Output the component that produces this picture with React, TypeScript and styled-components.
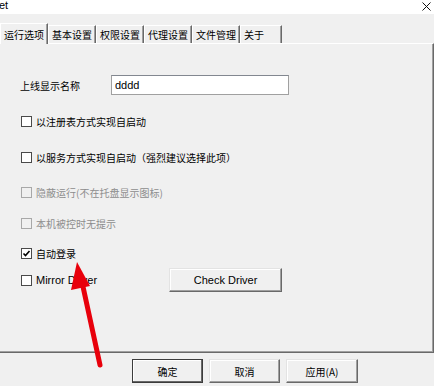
import React, { useState } from "react";
import styled, { createGlobalStyle } from "styled-components";

const cjk = `"Noto Sans CJK SC", "Liberation Sans", sans-serif`;
const latin = `"Liberation Sans", "Noto Sans CJK SC", sans-serif`;

const GlobalStyle = createGlobalStyle`
  html, body {
    margin: 0;
    padding: 0;
    background: #f0f0f0;
  }
  * {
    box-sizing: border-box;
  }
`;

const Window = styled.div`
  position: relative;
  width: 434px;
  height: 386px;
  overflow: hidden;
  background: #f0f0f0;
  font-family: ${latin};
  color: #000;
  display: flex;
  flex-direction: column;
`;

const TitleBar = styled.div`
  height: 14px;
  background: #fff;
  display: flex;
  justify-content: space-between;
  align-items: flex-start;
`;

const Title = styled.span`
  font-size: 11px;
  line-height: 11px;
  margin-left: -1px;
`;

const CloseIcon = styled.svg`
  margin: 2px 3px 0 0;
`;

const TabStrip = styled.div`
  display: flex;
  align-items: flex-end;
  height: 21px;
  margin-top: 8px;
`;

const Tab = styled.div<{ $active?: boolean; $extra?: number }>`
  height: ${(p) => (p.$active ? 21 : 18)}px;
  padding: 0 ${(p) => 3 + (p.$extra || 0)}px 0 3px;
  display: flex;
  align-items: center;
  font-family: ${cjk};
  font-size: 10px;
  white-space: nowrap;
  border-top: 1px solid #fff;
  border-left: 1px solid #fff;
  border-right: 1px solid #696969;
  box-shadow: inset -1px 0 #a0a0a0;
  position: relative;
  z-index: ${(p) => (p.$active ? 2 : 1)};
  margin-bottom: ${(p) => (p.$active ? -1 : 0)}px;
  background: #f0f0f0;
`;

const Panel = styled.div`
  width: 434px;
  height: 310px;
  border-top: 1px solid #fff;
  border-right: 1px solid #696969;
  border-bottom: 1px solid #696969;
  box-shadow: inset -1px -1px #a0a0a0;
  padding-left: 21px;
  display: flex;
  flex-direction: column;
`;

const FieldRow = styled.div<{ $top: number }>`
  display: flex;
  align-items: center;
  height: 20px;
  margin-top: ${(p) => p.$top}px;
`;

const Label = styled.span`
  width: 91px;
  margin-left: -1px;
  font-family: ${cjk};
  font-size: 10px;
`;

const TextInput = styled.input`
  width: 178px;
  height: 20px;
  border: 1px solid #a0a0a0;
  border-top-color: #828790;
  background: #fff;
  padding: 0 3px;
  font-family: ${latin};
  font-size: 11px;
  outline: none;
`;

const CheckRow = styled.div<{ $top: number; $tall?: boolean }>`
  display: flex;
  align-items: center;
  height: ${(p) => (p.$tall ? 24 : 14)}px;
  margin-top: ${(p) => p.$top}px;
`;

const CheckLabel = styled.label<{ $disabled?: boolean; $latin?: boolean }>`
  display: flex;
  align-items: center;
  gap: 4px;
  font-family: ${(p) => (p.$latin ? latin : cjk)};
  font-size: ${(p) => (p.$latin ? 11 : 10)}px;
  color: ${(p) => (p.$disabled ? "#8d8d8d" : "#000")};
  white-space: nowrap;
`;

const Box = styled.span<{ $disabled?: boolean }>`
  width: 11px;
  height: 11px;
  border: 1px solid ${(p) => (p.$disabled ? "#a8a8a8" : "#4a4a4a")};
  background: ${(p) => (p.$disabled ? "#f0f0f0" : "#fff")};
  display: flex;
  align-items: center;
  justify-content: center;
`;

const Button = styled.button<{ $default?: boolean; $width: number; $cjk?: boolean }>`
  width: ${(p) => p.$width}px;
  height: 24px;
  background: #f0f0f0;
  border: 1px solid;
  border-color: ${(p) =>
    p.$default ? "#3c3c3c" : "#e3e3e3 #696969 #696969 #e3e3e3"};
  box-shadow: ${(p) =>
    p.$default
      ? "inset -1px -1px #696969, inset 1px 1px #fff"
      : "inset -1px -1px #a0a0a0, inset 1px 1px #fff"};
  font-family: ${(p) => (p.$cjk ? cjk : latin)};
  font-size: ${(p) => (p.$cjk ? 10 : 11)}px;
  color: #000;
  padding: 0;
`;

const DriverButton = styled(Button)`
  margin-left: 72px;
`;

const ButtonRow = styled.div`
  display: flex;
  gap: 6px;
  padding-left: 132px;
  margin-top: 6px;
`;

const ArrowLayer = styled.svg`
  position: absolute;
  left: 0;
  top: 0;
  pointer-events: none;
`;

const Check = ({
  label,
  checked,
  disabled,
  latin,
}: {
  label: string;
  checked?: boolean;
  disabled?: boolean;
  latin?: boolean;
}) => (
  <CheckLabel $disabled={disabled} $latin={latin}>
    <Box $disabled={disabled}>
      {checked && (
        <svg width="9" height="9" viewBox="0 0 9 9">
          <polyline
            points="1.5,4.5 3.5,6.5 7.5,2"
            fill="none"
            stroke="#000"
            strokeWidth="1.6"
          />
        </svg>
      )}
    </Box>
    {label}
  </CheckLabel>
);

const tabs = ["运行选项", "基本设置", "权限设置", "代理设置", "文件管理", "关于"];

export default function App() {
  const [name, setName] = useState("dddd");
  return (
    <>
      <GlobalStyle />
      <Window>
        <TitleBar>
          <Title>et</Title>
          <CloseIcon width="9" height="9" viewBox="0 0 9 9">
            <path d="M0.5 0.5 L8.5 8.5 M8.5 0.5 L0.5 8.5" stroke="#111" strokeWidth="1" />
          </CloseIcon>
        </TitleBar>
        <TabStrip>
          {tabs.map((t, i) => (
            <Tab key={t} $active={i === 0} $extra={t === "关于" ? 14 : 0}>
              {t}
            </Tab>
          ))}
        </TabStrip>
        <Panel>
          <FieldRow $top={31}>
            <Label>上线显示名称</Label>
            <TextInput value={name} onChange={(e) => setName(e.target.value)} />
          </FieldRow>
          <CheckRow $top={19}>
            <Check label="以注册表方式实现自启动" />
          </CheckRow>
          <CheckRow $top={22}>
            <Check label="以服务方式实现自启动（强烈建议选择此项）" />
          </CheckRow>
          <CheckRow $top={21}>
            <Check label="隐蔽运行(不在托盘显示图标)" disabled />
          </CheckRow>
          <CheckRow $top={17}>
            <Check label="本机被控时无提示" disabled />
          </CheckRow>
          <CheckRow $top={16}>
            <Check label="自动登录" checked />
          </CheckRow>
          <CheckRow $top={8} $tall>
            <Check label="Mirror Driver" latin />
            <DriverButton $width={113}>Check Driver</DriverButton>
          </CheckRow>
        </Panel>
        <ButtonRow>
          <Button $default $cjk $width={71}>确定</Button>
          <Button $cjk $width={71}>取消</Button>
          <Button $cjk $width={72}>应用(A)</Button>
        </ButtonRow>
        <ArrowLayer width="434" height="386" viewBox="0 0 434 386">
          <line x1="100" y1="365" x2="82" y2="282" stroke="#e8000b" strokeWidth="5" strokeLinecap="round" />
          <polygon points="77,262 71,290 90,286" fill="#e8000b" />
        </ArrowLayer>
      </Window>
    </>
  );
}
